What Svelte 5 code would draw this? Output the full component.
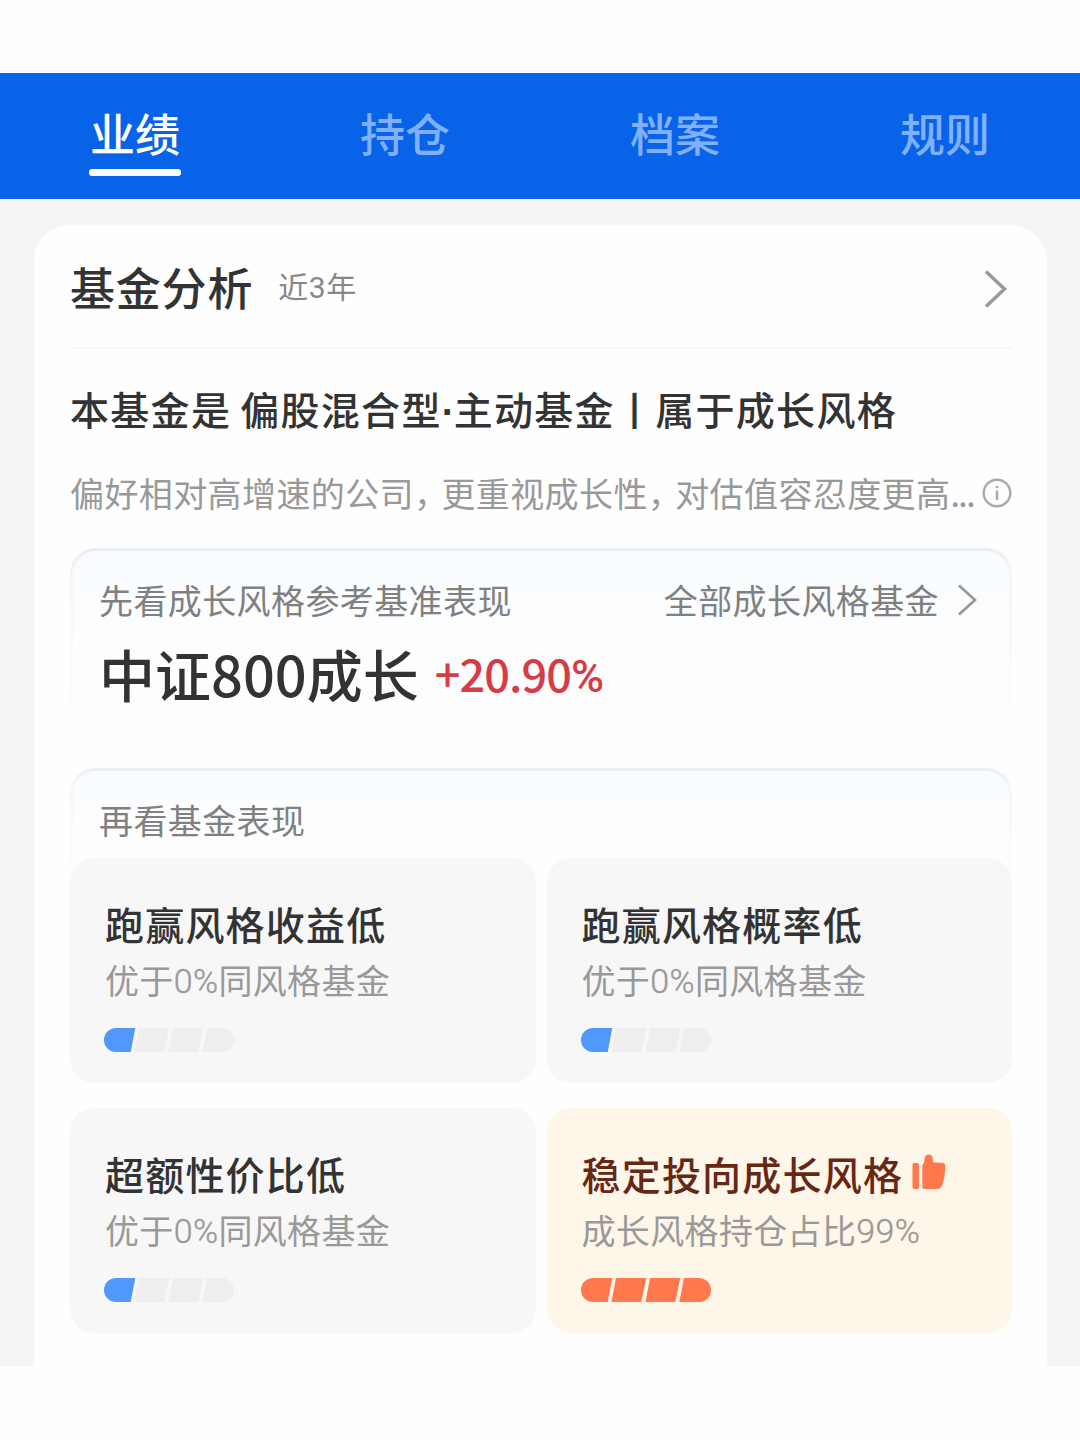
<script>
  const tabs = ['业绩', '持仓', '档案', '规则'];
  let activeTab = $state('业绩');

  const metrics = [
    { title: '跑赢风格收益低', before: '优于', num: '0%', after: '同风格基金', level: 1 },
    { title: '跑赢风格概率低', before: '优于', num: '0%', after: '同风格基金', level: 1 },
    { title: '超额性价比低', before: '优于', num: '0%', after: '同风格基金', level: 1 },
    { title: '稳定投向成长风格', before: '成长风格持仓占比', num: '99%', after: '', level: 4, good: true }
  ];

  // four slanted pieces of the level bar
  const segments = [
    'M12 0H31.3L26.7 24H12A12 12 0 0 1 12 0Z',
    'M35 0H65.3L60.2 24H30.5Z',
    'M69 0H99.3L94.3 24H64.5Z',
    'M103 0H118A12 12 0 0 1 118 24H98.3Z'
  ];
</script>

<div class="page">
  <nav class="tabs">
    {#each tabs as tab}
      <button class="tab" class:active={tab === activeTab} onclick={() => (activeTab = tab)}>
        <span>{tab}</span>
      </button>
    {/each}
  </nav>

  <main>
    <section class="card">
      <header class="card-header">
        <h2>基金分析</h2>
        <span class="period">近<span class="num">3</span>年</span>
        <svg class="arrow" width="24" height="38" viewBox="0 0 24 38">
          <path d="M2 1.5L20.5 19L2 36.5" />
        </svg>
      </header>

      <h3 class="headline">本基金是<span class="gap"></span>偏股混合型<span class="dot">·</span>主动基金丨属于成长风格</h3>

      <div class="desc">
        <span>偏好相对高增速的公司<i>，</i>更重视成长性<i>，</i>对估值容忍度更高<b>...</b></span>
        <svg width="30" height="30" viewBox="0 0 30 30">
          <circle cx="15" cy="15" r="13.3" />
          <path d="M15 12.5V22M15 8V10.3" />
        </svg>
      </div>

      <div class="panel benchmark">
        <div class="panel-row">
          <span>先看成长风格参考基准表现</span>
          <span class="more">
            全部成长风格基金
            <svg width="20" height="32" viewBox="0 0 20 32">
              <path d="M2 1.5L18 16L2 30.5" />
            </svg>
          </span>
        </div>
        <div class="index">
          <span class="name">中证800成长</span>
          <span class="change">+20.90<span class="percent">%</span></span>
        </div>
      </div>

      <div class="panel performance">
        <div class="panel-row"><span>再看基金表现</span></div>
      </div>

      <div class="grid">
        {#each metrics as item}
          <div class="cell" class:good={item.good}>
            <div class="cell-title">
              {item.title}
              {#if item.good}
                <svg class="thumb" width="34" height="36" viewBox="0 0 34 36">
                  <rect x="0.5" y="9" width="6.5" height="26" rx="1.8" />
                  <path d="M10.3 12C10.3 10 11.6 10.4 12 8.5L12.6 4.5C13 2 14.6 0.4 16.8 0.4C19.4 0.4 20.8 2.2 20.8 5C20.8 6.6 20.8 8.4 22.5 8.5L30 8.8C32.4 9 33.5 10.2 33.4 12.6C33.2 19 32.4 24.5 30.6 30C29.4 33.6 28 35 25 35H12.3C11 35 10.3 34.3 10.3 33Z" />
                </svg>
              {/if}
            </div>
            <div class="cell-sub">{item.before}<span class="num">{item.num}</span>{item.after}</div>
            <svg class="level" width="130" height="24" viewBox="0 0 130 24">
              {#each segments as d, i}
                <path {d} class:on={i < item.level} />
              {/each}
            </svg>
          </div>
        {/each}
      </div>
    </section>
  </main>
</div>

<style>
  :global(body) {
    margin: 0;
    background: #fff;
  }

  .page {
    box-sizing: border-box;
    width: 1080px;
    height: 1440px;
    padding: 73px 0 74px;
    display: flex;
    flex-direction: column;
    background: #fefefe;
    color: #333;
    font-family: 'Noto Sans CJK SC', sans-serif;
  }

  svg {
    display: block;
    flex: none;
    fill: none;
  }

  .tabs {
    display: grid;
    grid-template-columns: repeat(4, 1fr);
    height: 126px;
    flex: none;
    background: #0863e8;
  }

  .tab {
    display: flex;
    flex-direction: column;
    align-items: center;
    padding: 31px 0 0;
    border: none;
    background: none;
    color: #80b0ff;
    font: 500 45px/58px 'Noto Sans CJK SC', sans-serif;
  }

  .tab.active {
    color: #fff;
  }

  .tab.active::after {
    content: '';
    width: 92px;
    height: 7px;
    margin-top: 7px;
    border-radius: 3px;
    background: #fff;
  }

  main {
    flex: 1;
    padding: 26px 33px 0 34px;
    background: #f5f5f5;
  }

  .card {
    box-sizing: border-box;
    height: 100%;
    padding: 0 35px 0 36px;
    border-radius: 36px 36px 0 0;
    background: #fefefe;
  }

  .card-header {
    display: flex;
    align-items: center;
    height: 122px;
    border-bottom: 2px solid #f8f8f8;
  }

  h2 {
    margin: 2px 0 0;
    font-size: 45px;
    line-height: 60px;
    font-weight: 500;
    letter-spacing: 0.8px;
  }

  .period {
    margin: 1px 0 0 25px;
    color: #888;
    font-size: 30px;
    line-height: 60px;
    letter-spacing: 0.6px;
  }

  .num {
    font-family: Roboto, sans-serif;
  }

  .arrow {
    margin: 5px 4px 0 auto;
    stroke: #999;
    stroke-width: 3.5;
  }

  .headline {
    height: 60px;
    margin: 29px 0 30px;
    font-size: 39px;
    line-height: 60px;
    font-weight: 500;
    letter-spacing: 1.3px;
    white-space: nowrap;
  }

  .gap {
    display: inline-block;
    width: 9px;
  }

  .dot {
    font-family: 'Liberation Sans', sans-serif;
    font-weight: 700;
    line-height: 1;
    letter-spacing: -1px;
  }

  .desc {
    display: flex;
    align-items: center;
    justify-content: space-between;
    height: 50px;
    color: #999;
    font-size: 34px;
    line-height: 50px;
    letter-spacing: 0.4px;
    white-space: nowrap;
  }

  .desc i {
    margin-right: 10px;
    font-style: normal;
    font-feature-settings: 'halt';
  }

  .desc b {
    font-weight: 400;
    letter-spacing: -1.5px;
  }

  .desc svg {
    stroke: #aaa;
    stroke-width: 2.4;
  }

  .panel {
    box-sizing: border-box;
    border: 3px solid transparent;
    border-radius: 26px;
    padding: 24px 32px 0 26px;
    background:
      linear-gradient(#f8fcfe, #fdfdfe 50%, #fefefe) padding-box,
      linear-gradient(#ebedf0, #f5f6f7 14%, #fefefe) border-box;
  }

  .panel-row {
    display: flex;
    justify-content: space-between;
    color: #808080;
    font-size: 34px;
    line-height: 50px;
    letter-spacing: 0.4px;
  }

  .benchmark {
    height: 198px;
    margin-top: 30px;
  }

  .more {
    display: flex;
    align-items: center;
    gap: 18px;
  }

  .more svg {
    stroke: #999;
    stroke-width: 2.8;
  }

  .index {
    display: flex;
    align-items: flex-start;
    margin-top: 13px;
    line-height: 70px;
    font-weight: 500;
  }

  .name {
    font-size: 56px;
  }

  .change {
    margin-left: 16px;
    color: #d63c46;
    font-size: 45px;
    letter-spacing: -0.9px;
  }

  .percent {
    font-family: Roboto, sans-serif;
  }

  .performance {
    height: 120px;
    margin-top: 22px;
  }

  .grid {
    position: relative;
    display: grid;
    grid-template-columns: 1fr 1fr;
    gap: 25px 11px;
    margin-top: -30px;
  }

  .cell {
    box-sizing: border-box;
    height: 225px;
    padding: 40px 0 0 35px;
    border-radius: 24px;
    background: #f7f7f7;
  }

  .cell.good {
    background: #fff6ea;
  }

  .cell-title {
    display: flex;
    align-items: center;
    height: 50px;
    font-size: 39px;
    line-height: 50px;
    font-weight: 500;
    letter-spacing: 1.2px;
  }

  .good .cell-title {
    color: #662814;
  }

  .thumb {
    margin: -3px 0 0 9px;
    fill: #ff784e;
  }

  .cell-sub {
    height: 44px;
    margin-top: 10px;
    color: #999;
    font-size: 34px;
    line-height: 44px;
    letter-spacing: 0.35px;
  }

  .cell-sub .num {
    position: relative;
    top: -1px;
    font-weight: 300;
    -webkit-text-stroke: 0.4px #999;
  }

  .level {
    margin: 26px 0 0 -1px;
    fill: #eee;
  }

  .level .on {
    fill: #5098fc;
  }

  .good .level .on {
    fill: #ff784e;
  }
</style>
